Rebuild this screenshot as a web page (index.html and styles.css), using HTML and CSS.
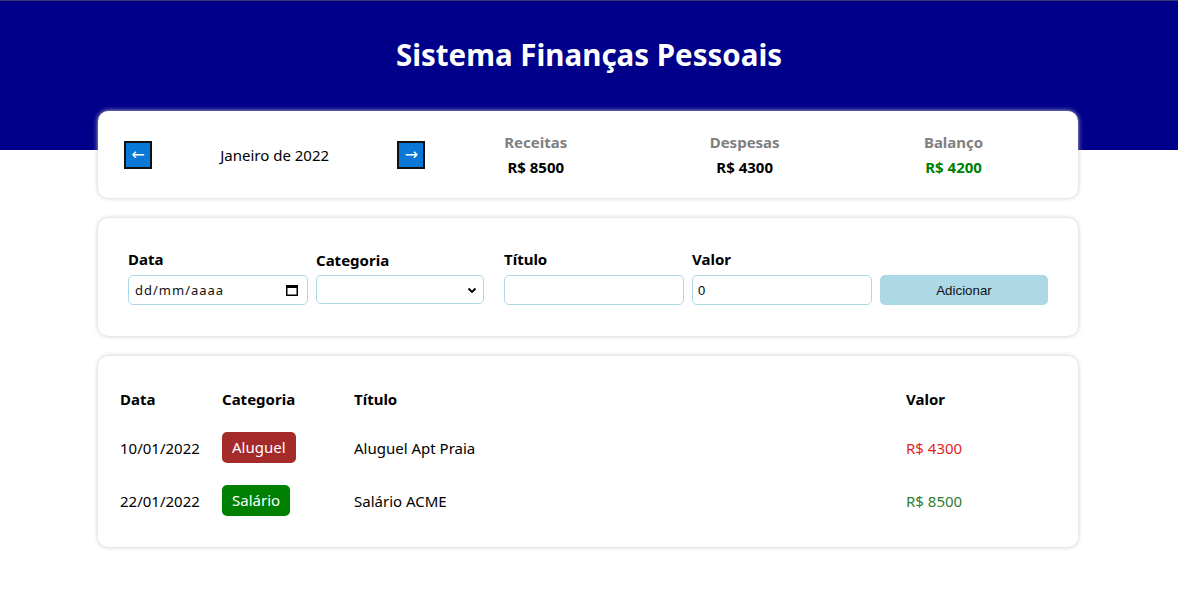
FILE: index.html
```html
<!DOCTYPE html>
<html lang="pt-BR">
<head>
<meta charset="utf-8">
<title>Sistema Finanças Pessoais</title>
<link rel="stylesheet" href="styles.css">
</head>
<body>
<header class="header">
  <h1 class="title">Sistema Finanças Pessoais</h1>
</header>
<main class="body">
  <section class="card info">
    <div class="month">
      <div class="arrow-box"><button class="arrow">&#8592;</button></div>
      <div class="month-title">Janeiro de 2022</div>
      <div class="arrow-box"><button class="arrow">&#8594;</button></div>
    </div>
    <div class="resume">
      <div class="resume-item">
        <div class="resume-label">Receitas</div>
        <div class="resume-value">R$ 8500</div>
      </div>
      <div class="resume-item">
        <div class="resume-label">Despesas</div>
        <div class="resume-value">R$ 4300</div>
      </div>
      <div class="resume-item">
        <div class="resume-label">Balanço</div>
        <div class="resume-value green">R$ 4200</div>
      </div>
    </div>
  </section>

  <section class="card form">
    <label class="field">
      <span class="field-title">Data</span>
      <span class="input-wrap">
        <input class="input date" type="text" placeholder="dd/mm/aaaa">
        <svg class="cal-icon" width="14" height="14" viewBox="0 0 14 14"><rect x="1.75" y="2.75" width="10.5" height="9.5" fill="none" stroke="#000" stroke-width="1.5"/><rect x="1" y="2" width="12" height="3" fill="#000"/></svg>
      </span>
    </label>
    <label class="field">
      <span class="field-title cat">Categoria</span>
      <span class="input-wrap select-wrap">
        <select class="input select"><option></option></select>
        <svg class="chev" width="10" height="7" viewBox="0 0 10 7"><path d="M1.5 1.5 L5 5 L8.5 1.5" fill="none" stroke="#000" stroke-width="1.8"/></svg>
      </span>
    </label>
    <label class="field">
      <span class="field-title">Título</span>
      <input class="input" type="text">
    </label>
    <label class="field">
      <span class="field-title">Valor</span>
      <input class="input" type="text" value="0">
    </label>
    <div class="field">
      <span class="field-title">&nbsp;</span>
      <button class="add">Adicionar</button>
    </div>
  </section>

  <section class="card list">
    <table class="table">
      <colgroup>
        <col class="c-date"><col class="c-cat"><col><col class="c-val">
      </colgroup>
      <thead>
        <tr><th>Data</th><th>Categoria</th><th>Título</th><th>Valor</th></tr>
      </thead>
      <tbody>
        <tr>
          <td>10/01/2022</td>
          <td><span class="badge brown">Aluguel</span></td>
          <td>Aluguel Apt Praia</td>
          <td class="red">R$ 4300</td>
        </tr>
        <tr>
          <td>22/01/2022</td>
          <td><span class="badge greenbg">Salário</span></td>
          <td>Salário ACME</td>
          <td class="green-val">R$ 8500</td>
        </tr>
      </tbody>
    </table>
  </section>
</main>
</body>
</html>
```
FILE: styles.css
```css
* { box-sizing: border-box; }
body {
  margin: 0;
  font-family: "Noto Sans", "Open Sans", sans-serif;
  font-size: 15px;
  color: #000;
  background: #fff;
}
.header {
  height: 150px;
  background: #00008b;
  border-top: 1px solid #3a3a70;
  text-align: center;
}
.title {
  margin: 0;
  padding-top: 35px;
  font-size: 29.5px;
  line-height: 38px;
  color: #fff;
  font-weight: 700;
}
.body {
  width: 982px;
  padding-right: 2px;
  margin: -39px auto 0;
}
.card {
  background: #fff;
  border-radius: 10px;
  box-shadow: 0 0 5px #c8c8c8;
  margin-bottom: 20px;
}
.info {
  display: flex;
  padding: 20px;
  align-items: center;
}
.month {
  flex: 1;
  display: flex;
  align-items: center;
}
.arrow-box {
  width: 40px;
  display: flex;
  justify-content: center;
}
.arrow {
  width: 28px;
  height: 28px;
  padding: 0;
  background: #0a78d6;
  border: 2px solid #111;
  color: #fff;
  font-size: 16px;
  line-height: 20px;
  font-family: "DejaVu Sans", sans-serif;
}
.month-title {
  flex: 1;
  text-align: center;
  font-size: 15px;
}
.resume {
  flex: 2;
  display: flex;
}
.resume-item {
  flex: 1;
  text-align: center;
}
.resume-label {
  color: #808080;
  font-weight: 700;
  font-size: 15px;
  line-height: 22px;
  margin-bottom: 3px;
}
.resume-value {
  font-weight: 700;
  font-size: 15px;
  line-height: 22px;
}
.green { color: #008000; }

.form {
  display: grid;
  grid-template-columns: repeat(5, 180px);
  column-gap: 8px;
  padding: 30px 30px 31px;
}
.field {
  display: flex;
  flex-direction: column;
}
.field-title {
  font-weight: 700;
  font-size: 15px;
  line-height: 22px;
  margin-bottom: 5px;
}
.field-title.cat { margin-top: 1px; margin-bottom: 4px; }
.input-wrap {
  position: relative;
  display: block;
}
.input {
  width: 180px;
  height: 30px;
  border: 1px solid #add8e6;
  border-radius: 5px;
  padding: 0 5px;
  font-family: "Liberation Sans", Arial, sans-serif;
  font-size: 13px;
  background: #fff;
  color: #000;
  outline: none;
}
.date {
  font-family: "Noto Sans", sans-serif;
  font-size: 13px;
  letter-spacing: 1px;
  padding-left: 6px;
}
.date::placeholder { color: #111; opacity: 1; }
.cal-icon {
  position: absolute;
  right: 9px;
  top: 8px;
}
.select-wrap { width: 168px; }
.select {
  width: 168px;
  height: 29px;
  -webkit-appearance: none;
  appearance: none;
}
.chev {
  position: absolute;
  right: 7px;
  top: 12px;
}
.add {
  width: 168px;
  height: 30px;
  background: #add8e6;
  border: none;
  border-radius: 5px;
  font-family: "Liberation Sans", Arial, sans-serif;
  font-size: 13.33px;
  color: #111;
}

.list { padding: 20px; }
.table {
  width: 100%;
  border-collapse: collapse;
}
.c-date { width: 102px; }
.c-cat { width: 132px; }
.c-val { width: 154px; }
.table th, .table td {
  padding: 0 0 0 2px;
  text-align: left;
  vertical-align: middle;
}
.table th {
  height: 45px;
  font-weight: 700;
  font-size: 15px;
}
.table td {
  height: 53px;
  font-size: 15px;
}
.badge {
  display: inline-block;
  padding: 0 10px;
  height: 31px;
  line-height: 31px;
  border-radius: 5px;
  color: #fff;
}
.brown { background: #a52a2a; }
.greenbg { background: #008000; }
.red { color: #e61e1e; }
.green-val { color: #2e7d32; }
```
